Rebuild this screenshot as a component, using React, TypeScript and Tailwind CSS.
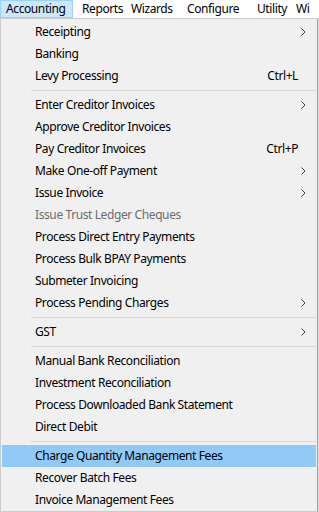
import React from "react";

type Item =
  | { sep: true }
  | { sep?: false; label: string; shortcut?: string; sub?: boolean; disabled?: boolean; active?: boolean };

const items: Item[] = [
  { label: "Receipting", sub: true },
  { label: "Banking" },
  { label: "Levy Processing", shortcut: "Ctrl+L" },
  { sep: true },
  { label: "Enter Creditor Invoices", sub: true },
  { label: "Approve Creditor Invoices" },
  { label: "Pay Creditor Invoices", shortcut: "Ctrl+P" },
  { label: "Make One-off Payment", sub: true },
  { label: "Issue Invoice", sub: true },
  { label: "Issue Trust Ledger Cheques", disabled: true },
  { label: "Process Direct Entry Payments" },
  { label: "Process Bulk BPAY Payments" },
  { label: "Submeter Invoicing" },
  { label: "Process Pending Charges", sub: true },
  { sep: true },
  { label: "GST", sub: true },
  { sep: true },
  { label: "Manual Bank Reconciliation" },
  { label: "Investment Reconciliation" },
  { label: "Process Downloaded Bank Statement" },
  { label: "Direct Debit" },
  { sep: true },
  { label: "Charge Quantity Management Fees", active: true },
  { label: "Recover Batch Fees" },
  { label: "Invoice Management Fees" },
];

const Chevron = () => (
  <svg width="5" height="8" viewBox="0 0 5 8" className="block">
    <polyline points="0.5,0.5 4,4 0.5,7.5" fill="none" stroke="#404040" strokeWidth="1" />
  </svg>
);

export default function App() {
  const font = { fontFamily: '"Segoe UI", "Noto Sans", "Open Sans", sans-serif' };
  return (
    <div
      className="w-[319px] h-[512px] overflow-hidden bg-white text-[12px] tracking-[-0.4px] text-black"
      style={font}
    >
      <div className="flex h-[18px] items-center bg-white whitespace-nowrap">
        <div className="h-[18px] w-[73px] shrink-0 border border-[#99d1ff] bg-[#cce8ff] pl-[5px] leading-[16px]">Accounting</div>
        <div className="w-[9px] shrink-0" />
        <div className="w-[49px] shrink-0 leading-[18px]">Reports</div>
        <div className="w-[56px] shrink-0 leading-[18px]">Wizards</div>
        <div className="w-[70px] shrink-0 leading-[18px]">Configure</div>
        <div className="w-[39px] shrink-0 leading-[18px]">Utility</div>
        <div className="shrink-0 leading-[18px]">Wi</div>
      </div>
      <div className="flex w-[319px]">
        <div className="w-[318px] border border-[#cccccc] border-r-[#a0a0a0] bg-[#f0f0f0] px-px pt-[2px]">
          {items.map((it, i) =>
            it.sep ? (
              <div key={i} className="flex h-[7px] items-center pl-[29px]">
                <div className="h-px w-full bg-[#d7d7d7]" />
              </div>
            ) : (
              <div
                key={i}
                className={`flex h-[22px] items-center pl-[33px] pr-[10px] ${it.active ? "bg-[#91c9f7]" : ""} ${
                  it.disabled ? "text-[#6d6d6d]" : ""
                }`}
              >
                <span className="flex-1 whitespace-nowrap">{it.label}</span>
                {it.shortcut && <span className="mr-[8px]">{it.shortcut}</span>}
                {it.sub && <Chevron />}
              </div>
            )
          )}
        </div>
        <div className="w-px bg-[#e0e0e0]" />
      </div>
    </div>
  );
}
